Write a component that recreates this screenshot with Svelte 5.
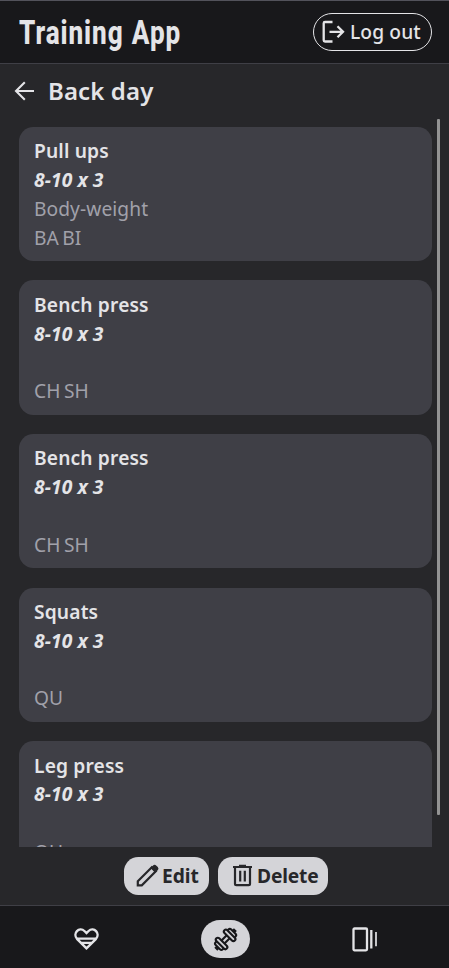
<script>
  const exercises = [
    { name: 'Pull ups', sets: '8-10 x 3', note: 'Body-weight', muscles: 'BA BI' },
    { name: 'Bench press', sets: '8-10 x 3', note: '', muscles: 'CH SH' },
    { name: 'Bench press', sets: '8-10 x 3', note: '', muscles: 'CH SH' },
    { name: 'Squats', sets: '8-10 x 3', note: '', muscles: 'QU' },
    { name: 'Leg press', sets: '8-10 x 3', note: '', muscles: 'QU' }
  ];
</script>

<div class="app">
  <header>
    <h1><span>Training App</span></h1>
    <button class="logout">
      <svg width="24" height="24" viewBox="0 0 24 24" fill="none" stroke="currentColor" stroke-width="2.3">
        <path d="M11.5 2H4Q2.7 2 2.7 3.3V20.2Q2.7 21.5 4 21.5H11.5M8.5 11.8H22M16.5 6.3L22 11.8L16.5 17.3" />
      </svg>
      <span>Log out</span>
    </button>
  </header>

  <div class="heading">
    <svg width="20" height="20" viewBox="0 0 20 20" fill="none" stroke="currentColor" stroke-width="2.1">
      <path d="M20 10H2M10.8 1.2L2 10L10.8 18.8" />
    </svg>
    <h2>Back day</h2>
  </div>

  <main>
    <div class="list">
      {#each exercises as item}
        <article>
          <p class="name">{item.name}</p>
          <p class="sets">{item.sets}</p>
          <p class="muted">{item.note}</p>
          <p class="muted muscles">{item.muscles}</p>
        </article>
      {/each}
    </div>
    <div class="scrollbar"></div>
  </main>

  <div class="actions">
    <button class="edit">
      <svg width="24" height="24" viewBox="0 0 24 24" fill="none" stroke="currentColor" stroke-width="2.2">
        <path d="M1.8 17.2L15.8 3.2L19.8 7.2L5.8 21.3H1.8Z" />
        <path d="M14.5 4L16.8 1.7Q18.6 0 20.4 1.7L21.8 3.1Q23.3 4.8 21.7 6.3L19.2 8.8Z" fill="currentColor" stroke="none" />
      </svg>
      <span>Edit</span>
    </button>
    <button class="delete">
      <svg width="24" height="24" viewBox="0 0 24 24" fill="none" stroke="currentColor" stroke-width="2.2">
        <path d="M3 3H22M9 1.9H16M5 3V19.8Q5 21.2 6.4 21.2H18.6Q20 21.2 20 19.8V3M10.2 6.8V17.5M14.8 6.8V17.5" />
      </svg>
      <span>Delete</span>
    </button>
  </div>

  <nav>
    <a href="#health" aria-label="Health">
      <svg width="27" height="24" viewBox="0 0 27 24" fill="none" stroke="currentColor" stroke-width="2.4">
        <path d="M13.5 21.3L4.2 12.1C-1 6.5 6.3-.9 11.4 4L13.5 6.1L15.6 4C20.7-.9 28 6.5 22.8 12.1ZM4.5 11.6H22.5M8 15.9H19" />
      </svg>
    </a>
    <a href="#training" class="active" aria-label="Training">
      <svg width="28" height="28" viewBox="0 0 28 28" fill="none" stroke="currentColor" stroke-width="2.1">
        <g transform="translate(13.6 14.4) rotate(-45)">
          <path d="M-3.7-2.1H3.7M-3.7 2.1H3.7M-11-1H-12.8V1H-11M11-1H12.8V1H11" />
          <rect x="-7.7" y="-7.3" width="4" height="14.6" rx="2" />
          <rect x="3.7" y="-7.3" width="4" height="14.6" rx="2" />
          <path d="M-7.7-5H-9Q-11-5-11-3V3Q-11 5-9 5H-7.7M7.7-5H9Q11-5 11-3V3Q11 5 9 5H7.7" />
        </g>
      </svg>
    </a>
    <a href="#cards" aria-label="Cards">
      <svg width="27" height="26" viewBox="0 0 27 26" fill="none" stroke="currentColor" stroke-width="2.3">
        <rect x="2.5" y="2.5" width="13.5" height="21.8" rx="1" />
        <path d="M20.3 4V22.5" /><path d="M25 6V20.3" stroke-width="1.7" />
      </svg>
    </a>
  </nav>
</div>

<style>
  :global(body) { margin: 0; background: #27272a; }
  .app {
    box-sizing: border-box;
    width: 100%;
    height: 968px;
    display: flex;
    flex-direction: column;
    overflow: hidden;
    background: #27272a;
    color: #e4e4e7;
    font: 19.2px/28.8px 'Noto Sans', sans-serif;
  }
  h1, h2, p { margin: 0; }
  svg { display: block; flex: none; }
  button {
    box-sizing: border-box;
    display: flex;
    align-items: center;
    margin: 0;
    border: 0;
    font: inherit;
    white-space: nowrap;
  }
  header {
    box-sizing: border-box;
    flex: none;
    height: 64px;
    display: flex;
    align-items: center;
    justify-content: space-between;
    padding: 0 17px 0 19px;
    border-top: 1px solid #52525b;
    border-bottom: 1px solid #3f3f46;
    background: #18181b;
  }
  h1 {
    width: 163px;
    padding-top: 1px;
    font: 800 33px/40px Roboto, sans-serif;
    letter-spacing: 1.2px;
    word-spacing: 1px;
    white-space: nowrap;
  }
  h1 span { display: inline-block; transform: scaleX(0.79); transform-origin: 0 50%; }
  .logout {
    width: 119px;
    height: 38px;
    padding: 0 0 0 7px;
    gap: 5px;
    border: 1px solid #e4e4e7;
    border-radius: 19px;
    background: transparent;
    color: #e4e4e7;
    font-weight: 500;
    letter-spacing: 0.12px;
  }
  .heading {
    box-sizing: border-box;
    flex: none;
    height: 55px;
    display: flex;
    align-items: center;
    gap: 14px;
    padding: 0 0 2px 14px;
  }
  h2 { font-size: 24px; line-height: 36px; font-weight: 600; letter-spacing: 0.12px; }
  main {
    flex: none;
    height: 728px;
    display: flex;
    justify-content: space-between;
    padding: 0 9px 0 19px;
    overflow: hidden;
  }
  .list {
    width: 413px;
    display: flex;
    flex-direction: column;
    gap: 19.2px;
    padding-top: 7.9px;
  }
  article {
    flex: none;
    box-sizing: border-box;
    height: 134.4px;
    padding: 10.4px 15px 8.8px;
    border-radius: 14.4px;
    background: #3f3f46;
  }
  p { height: 28.8px; }
  .name { font-weight: 600; letter-spacing: 0.15px; }
  .sets { font-weight: 700; font-style: italic; letter-spacing: 0.1px; }
  .muted { color: #a1a1aa; letter-spacing: 0.08px; }
  .muscles { letter-spacing: 0; word-spacing: -1.4px; }
  .scrollbar { width: 3px; height: 696px; border-radius: 1px; background: #939393; }
  .actions {
    flex: none;
    height: 58px;
    display: flex;
    justify-content: center;
    align-items: center;
    gap: 9px;
    padding-left: 3px;
    box-sizing: border-box;
  }
  .actions button {
    height: 38px;
    border-radius: 14.4px;
    background: #d4d4d8;
    color: #27272a;
    font-weight: 700;
    padding: 0 0 0 12px;
  }
  .actions .edit { width: 85px; gap: 2px; }
  .actions .delete { width: 110px; gap: 3px; letter-spacing: -0.15px; }
  nav {
    flex: none;
    box-sizing: border-box;
    height: 63px;
    display: flex;
    align-items: center;
    justify-content: space-between;
    padding: 4px 60px 0 62px;
    border-top: 1px solid #3f3f46;
    background: #18181b;
  }
  nav a {
    width: 49px;
    height: 38px;
    display: flex;
    align-items: center;
    justify-content: center;
    border-radius: 19px;
    color: #e4e4e7;
  }
  nav .active { background: #d4d4d8; color: #18181b; }
</style>
